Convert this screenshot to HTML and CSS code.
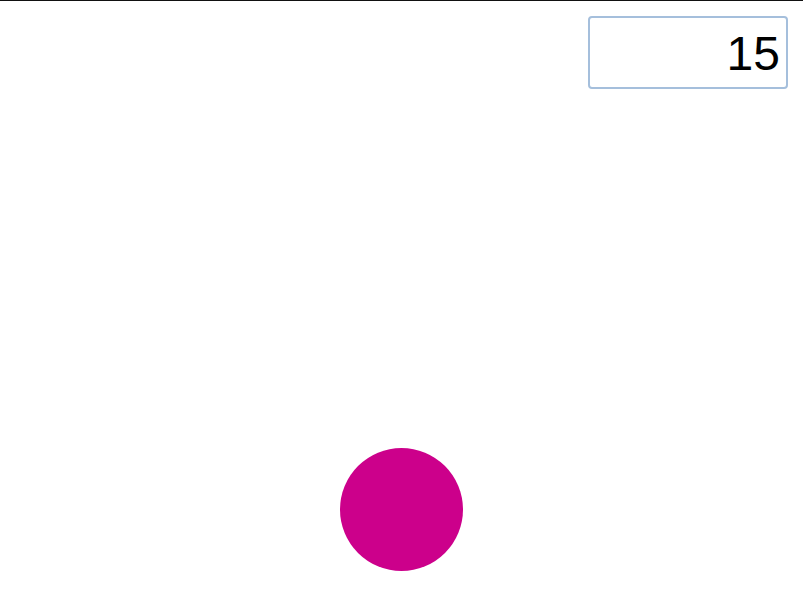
FILE: index.html
```html
<!DOCTYPE html>
<html>
<head>
<meta charset="utf-8">
<link rel="stylesheet" href="styles.css">
</head>
<body>
<div class="page">
  <div class="top">
    <div class="field">15</div>
  </div>
  <div class="stage">
    <div class="ball"></div>
  </div>
</div>
</body>
</html>
```
FILE: styles.css
```css
html, body {
  margin: 0;
  padding: 0;
  background: #ffffff;
}
.page {
  width: 803px;
  height: 604px;
  border-top: 1px solid #111111;
  box-sizing: border-box;
  display: flex;
  flex-direction: column;
  font-family: "Liberation Sans", Arial, sans-serif;
}
.top {
  display: flex;
  justify-content: flex-end;
  padding: 15px 15px 0 0;
}
.field {
  width: 200px;
  height: 73px;
  box-sizing: border-box;
  border: 2px solid #a5bfdc;
  border-radius: 4px;
  font-size: 48px;
  line-height: 71px;
  text-align: right;
  padding-right: 6px;
  color: #000;
}
.stage {
  display: flex;
  justify-content: center;
  padding-top: 359px;
}
.ball {
  width: 123px;
  height: 123px;
  border-radius: 50%;
  background: #cc008b;
}
```
